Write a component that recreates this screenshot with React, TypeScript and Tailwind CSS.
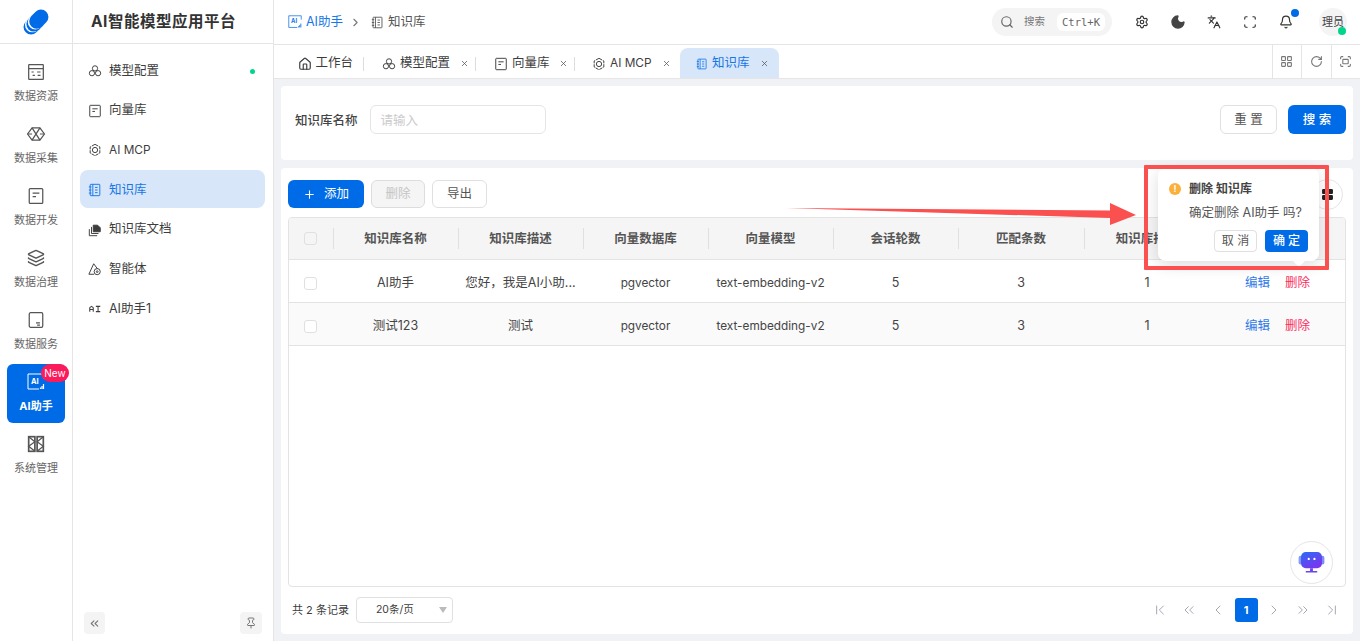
import React from 'react';
import { Bell, ChevronFirst, ChevronLast, ChevronLeft, ChevronRight, ChevronsLeft, ChevronsRight, Fullscreen, House, Languages, Layers, LayoutGrid, Moon, Pin, Plus, RotateCw, Scan, Search, Settings, X } from 'lucide-react';

type IconProps = { className?: string };

const Svg: React.FC<IconProps & { children: React.ReactNode }> = ({ className, children }) => (
  <svg viewBox="0 0 16 16" fill="none" stroke="currentColor" strokeWidth="1.1" className={className}>{children}</svg>
);

const ResourceIcon = ({ className }: IconProps) => (
  <Svg className={className}>
    <rect x="1.5" y="1.5" width="13" height="13" rx="0.5" />
    <path d="M1.5 5h13M4 8h2M9 8h3M5 11h2M9.5 11h2.5" />
  </Svg>
);
const CollectIcon = ({ className }: IconProps) => (
  <Svg className={className}>
    <path d="M4.5 2.5h7L15.5 8l-4 5.5h-7L.5 8z" />
    <path d="M4.5 2.5 11.5 13.5M11.5 2.5 4.5 13.5M.5 8h4M11.5 8h4" />
  </Svg>
);
const DocIcon = ({ className }: IconProps) => (
  <Svg className={className}>
    <rect x="2" y="1.5" width="12" height="13" rx="0.8" />
    <path d="M5 5.5h6M5 8.5h3" />
  </Svg>
);
const ServiceIcon = ({ className }: IconProps) => (
  <Svg className={className}>
    <rect x="2" y="1.5" width="12" height="13" rx="1.2" />
    <path d="M8 10.5h3.5M9 12.5h2.5" />
  </Svg>
);
const AiIcon = ({ className }: IconProps) => (
  <svg viewBox="0 0 18 18" fill="none" stroke="currentColor" strokeWidth="1" className={className}>
    <path d="M17 6V1H1v15h11" />
    <text x="4" y="10.5" fontSize="7.5" fontWeight="700" fill="currentColor" stroke="none" fontFamily="Inter">AI</text>
    <path d="M13.5 16v-1.5M15 16v-3M16.5 16V11" strokeWidth="1.2" />
  </svg>
);
const SystemIcon = ({ className }: IconProps) => (
  <Svg className={className}>
    <rect x="1.5" y="1.5" width="5.5" height="13" strokeWidth="1.5" />
    <rect x="9" y="1.5" width="5.5" height="13" strokeWidth="1.5" />
    <path d="M1.5 1.5 7 6 1.5 10 7 14.500M14.5 1.500 9 6l5.500 4L9 14.500" />
  </Svg>
);
const ModelIcon = ({ className }: IconProps) => (
  <Svg className={className}>
    <circle cx="8" cy="5" r="3" />
    <circle cx="4.500" cy="10.500" r="3" />
    <circle cx="11.500" cy="10.500" r="3" />
  </Svg>
);
const McpIcon = ({ className }: IconProps) => (
  <Svg className={className}>
    <path d="M8 1.500 13.500 4.500v7L8 14.500 2.500 11.500v-7z" strokeDasharray="4 1" />
    <circle cx="8" cy="8" r="3" />
  </Svg>
);
const BookIcon = ({ className }: IconProps) => (
  <Svg className={className}>
    <rect x="2.500" y="1.500" width="11" height="13" rx="0.8" />
    <path d="M5.500 1.500v13M1 4.500h3M1 8h3M1 11.500h3M8 5h3M8 8h3M8 11h3" />
  </Svg>
);
const FilesIcon = ({ className }: IconProps) => (
  <Svg className={className}>
    <path d="M6 10V2.500h5l3 3V10z" fill="currentColor" />
    <path d="M4 4.500v7.500h8M1.500 7v7.500h9" />
  </Svg>
);
const AgentIcon = ({ className }: IconProps) => (
  <Svg className={className}>
    <path d="M6.500 2 1 14h6" />
    <path d="M6.500 2 11 8" />
    <circle cx="10.500" cy="11" r="3.500" />
    <circle cx="10.500" cy="11" r="1" />
  </Svg>
);
const RiIcon = ({ className }: IconProps) => (
  <Svg className={className}>
    <path d="M2 11V6.500L4 5l2 1.500V11M2 8.500h4M9 5h5M11.500 5v6M9 11h5" strokeWidth="1.200" />
  </Svg>
);
const Logo = () => (
  <svg viewBox="0 0 26 26" className="w-[26px] h-[26px]">
    <g transform="rotate(-45 13 13)">
      <rect x="-1.500" y="5.500" width="20" height="15" rx="7.500" fill="#006be6" />
      <rect x="1" y="5" width="20" height="15" rx="7.500" fill="#fff" />
      <rect x="2.500" y="5.500" width="20" height="15" rx="7.500" fill="#006be6" />
      <rect x="5" y="5" width="20" height="15" rx="7.500" fill="#fff" />
      <rect x="6.500" y="5.500" width="21" height="15" rx="7.500" fill="#006be6" />
    </g>
  </svg>
);
const RobotIcon = () => (
  <svg viewBox="0 0 28 22" className="w-[27px] h-[21px]">
    <defs>
      <linearGradient id="bot" x1="0" y1="0" x2="0.600" y2="1">
        <stop offset="0" stopColor="#2a6cf5" />
        <stop offset="1" stopColor="#7a35ee" />
      </linearGradient>
    </defs>
    <rect x="0.500" y="4" width="4" height="9" rx="2" fill="#7f9df7" />
    <rect x="23.500" y="4" width="4" height="9" rx="2" fill="#7f8df7" />
    <rect x="3" y="0" width="22" height="17" rx="5" fill="url(#bot)" />
    <rect x="10" y="6" width="2.200" height="2.500" rx="1" fill="#fff" />
    <rect x="16" y="6" width="2.200" height="2.500" rx="1" fill="#fff" />
    <path d="M8 20h12v1.500H8zM12.500 17h3v3h-3z" fill="#6a45ee" />
  </svg>
);

const railItems = [
  { label: '数据资源', Icon: ResourceIcon },
  { label: '数据采集', Icon: CollectIcon },
  { label: '数据开发', Icon: DocIcon },
  { label: '数据治理', Icon: Layers },
  { label: '数据服务', Icon: ServiceIcon },
  { label: 'AI助手', Icon: AiIcon, active: true },
  { label: '系统管理', Icon: SystemIcon },
];

const menuItems = [
  { label: '模型配置', Icon: ModelIcon, dot: true },
  { label: '向量库', Icon: DocIcon },
  { label: 'AI MCP', Icon: McpIcon },
  { label: '知识库', Icon: BookIcon, active: true },
  { label: '知识库文档', Icon: FilesIcon },
  { label: '智能体', Icon: AgentIcon },
  { label: 'AI助手1', Icon: RiIcon },
];

const columns = ['知识库名称', '知识库描述', '向量数据库', '向量模型', '会话轮数', '匹配条数', '知识库排序'];

const rows = [
  ['AI助手', '您好，我是AI小助...', 'pgvector', 'text-embedding-v2', '5', '3', '1'],
  ['测试123', '测试', 'pgvector', 'text-embedding-v2', '5', '3', '1'],
];

const tableGrid = 'grid grid-cols-[45px_125px_125px_125px_125px_125px_126px_126px_1fr]';

const App: React.FC = () => {
  return (
    <div className="relative flex h-[641px] w-[1360px] overflow-hidden bg-[#f0f2f6] text-[12.500px] text-[#3d3d3d] font-['Inter','Noto_Sans_CJK_SC',sans-serif]">
      {/* icon rail */}
      <aside className="w-[73px] shrink-0 bg-white border-r border-[#e5e5e5] flex flex-col items-center">
        <div className="h-[44px] w-full flex items-center justify-center border-b border-[#e5e5e5]">
          <Logo />
        </div>
        <div className="flex flex-col gap-[4px] pt-[13px]">
          {railItems.map(({ label, Icon, active }) => (
            <div key={label} className={`relative w-[58px] rounded-[6px] flex flex-col items-center ${active ? '-mt-[3px] mb-[2px] h-[59px] pt-[9px] bg-[#006be6] text-white font-bold' : 'h-[58px] pt-[6px] text-[#666]'}`}>
              <Icon className={`w-[18px] h-[18px] ${active ? 'text-white' : 'text-[#555]'}`} />
              <span className="mt-[7px] text-[11px] leading-[16px] whitespace-nowrap">{label}</span>
              {active && (
                <span className="absolute top-0 -right-[4px] h-[18px] w-[28px] rounded-full bg-[#fb1a5c] text-white text-[10px] font-normal leading-[18px] text-center">New</span>
              )}
            </div>
          ))}
        </div>
      </aside>

      {/* menu */}
      <aside className="w-[201px] shrink-0 bg-white border-r border-[#e5e5e5] flex flex-col">
        <div className="h-[44px] border-b border-[#e5e5e5] flex items-center pl-[18px] text-[15.500px] font-bold text-[#333] tracking-[0.500px] whitespace-nowrap">AI智能模型应用平台</div>
        <nav className="flex flex-col gap-[1.700px] pt-[7px] px-[7px]">
          {menuItems.map(({ label, Icon, dot, active }) => (
            <div key={label} className={`h-[38px] w-[185px] rounded-[8px] flex items-center pl-[8px] pt-[2px] ${active ? 'bg-[#d8e6f9] text-[#1677e8]' : 'text-[#3d3d3d]'}`}>
              <Icon className="w-[14px] h-[14px] shrink-0" />
              <span className={`ml-[7px] ${label === 'AI MCP' ? 'text-[11.800px]' : ''}`}>{label}</span>
              {dot && <span className="ml-auto mr-[10px] w-[5px] h-[5px] rounded-full bg-[#00d68a]" />}
            </div>
          ))}
        </nav>
        <div className="mt-auto flex justify-between px-[11px] pb-[7px]">
          <button className="w-[21px] h-[22px] rounded-[4px] bg-[#f4f4f5] flex items-center justify-center text-[#777]"><ChevronsLeft className="w-[13px] h-[13px]" /></button>
          <button className="w-[22px] h-[22px] rounded-[4px] bg-[#f4f4f5] flex items-center justify-center text-[#777]"><Pin className="w-[12px] h-[12px]" /></button>
        </div>
      </aside>

      <main className="flex-1 min-w-0 flex flex-col">
        {/* top bar */}
        <header className="h-[45px] shrink-0 bg-white border-b border-[#e5e5e5] flex items-center pl-[14px] pr-[13px]">
          <AiIcon className="w-[14px] h-[14px] text-[#1677e8]" />
          <span className="ml-[4px] text-[#1677e8]">AI助手</span>
          <ChevronRight className="ml-[6px] w-[13px] h-[13px] text-[#777]" />
          <BookIcon className="ml-[9px] w-[13px] h-[13px] text-[#555]" />
          <span className="ml-[4px] text-[#555]">知识库</span>
          <div className="ml-auto w-[120px] h-[28px] rounded-full bg-[#f4f4f5] flex items-center pl-[8px] pr-[7px]">
            <Search className="w-[14px] h-[14px] text-[#666]" />
            <span className="ml-[10px] text-[10.500px] text-[#777]">搜索</span>
            <span className="ml-auto w-[48px] h-[18px] rounded-[6px] bg-white text-center text-[10.500px] leading-[18px] text-[#666] font-['DejaVu_Sans_Mono',monospace]">Ctrl+K</span>
          </div>
          <div className="ml-[23px] flex items-center gap-[22px] text-[#333]">
            <Settings className="w-[14px] h-[14px]" />
            <Moon className="w-[14px] h-[14px] scale-[1.150] fill-[#444] text-[#444]" />
            <Languages className="w-[14px] h-[14px]" />
            <Scan className="w-[14px] h-[14px]" />
            <div className="relative">
              <Bell className="w-[14px] h-[14px]" />
              <span className="absolute -top-[6px] -right-[6px] w-[8px] h-[8px] rounded-full bg-[#006be6]" />
            </div>
          </div>
          <div className="relative ml-[26px] w-[28px] h-[28px] rounded-full bg-[#f4f4f5] text-[11px] leading-[28px] text-center text-[#444]">
            理员
            <span className="absolute right-[1px] bottom-[1px] w-[8px] h-[8px] rounded-full bg-[#00d68a]" />
          </div>
        </header>

        {/* tabs */}
        <div className="h-[34px] shrink-0 bg-white border-b border-[#e5e5e5] flex items-end">
          <div className="h-[31px] w-[90px] pl-[24px] pt-[2px] flex items-center gap-[3.500px]">
            <House className="w-[14px] h-[14px]" />
            <span>工作台</span>
            <span className="ml-auto h-[14px] border-r border-[#ddd]" />
          </div>
          <div className="h-[31px] w-[112px] pl-[18px] pt-[2px] flex items-center">
            <ModelIcon className="w-[14px] h-[14px] shrink-0" />
            <span className="ml-[4px] whitespace-nowrap">模型配置</span>
            <X className="ml-auto mr-[6px] w-[9px] h-[9px] text-[#555]" />
            <span className="h-[14px] border-r border-[#ddd]" />
          </div>
          <div className="h-[31px] w-[99px] pl-[18px] pt-[2px] flex items-center">
            <DocIcon className="w-[14px] h-[14px] shrink-0" />
            <span className="ml-[4px] whitespace-nowrap">向量库</span>
            <X className="ml-auto mr-[6px] w-[9px] h-[9px] text-[#555]" />
            <span className="h-[14px] border-r border-[#ddd]" />
          </div>
          <div className="h-[31px] w-[105px] pl-[17px] pt-[2px] flex items-center">
            <McpIcon className="w-[14px] h-[14px] shrink-0" />
            <span className="ml-[4px] text-[11.800px] whitespace-nowrap">AI MCP</span>
            <X className="ml-auto mr-[9px] w-[9px] h-[9px] text-[#555]" />
          </div>
          <div className="h-[30px] w-[99px] rounded-t-[8px] bg-[#d8e6f9] text-[#1677e8] flex items-center pl-[16px] pt-[1px]">
            <BookIcon className="w-[12px] h-[12px]" />
            <span className="ml-[4px]">知识库</span>
            <X className="ml-auto mr-[10px] w-[9px] h-[9px] text-[#555]" />
          </div>
          <div className="ml-auto flex h-[33px] text-[#777]">
            {[LayoutGrid, RotateCw, Fullscreen].map((Icon, i) => (
              <div key={i} className="w-[29.500px] flex items-center justify-center border-l border-[#e5e5e5]">
                <Icon className="w-[13px] h-[13px]" />
              </div>
            ))}
          </div>
        </div>

        {/* content */}
        <div className="flex-1 min-h-0 flex flex-col gap-[8px] p-[7px]">
          <section className="h-[74px] shrink-0 bg-white rounded-[4px] flex items-center pl-[14px] pr-[7px] pb-[7px]">
            <label className="pt-[3px] font-medium text-[#444]">知识库名称</label>
            <div className="ml-[12px] w-[176px] h-[29px] rounded-[6px] border border-[#e5e5e5] pl-[10px] leading-[29px] text-[#ccc]">请输入</div>
            <button className="ml-auto w-[57px] h-[29px] pt-[2px] rounded-[6px] border border-[#e0e0e0] text-[#555]">重 置</button>
            <button className="ml-[11px] w-[58px] h-[29px] pt-[2px] rounded-[6px] bg-[#006be6] text-white font-medium">搜 索</button>
          </section>

          <section className="flex-1 min-h-0 bg-white rounded-[4px] flex flex-col px-[7px] pt-[12px] pb-[11px]">
            <div className="h-[28px] shrink-0 flex items-center">
              <button className="w-[76px] h-[28px] rounded-[6px] bg-[#006be6] text-white flex items-center justify-center gap-[8px]"><Plus className="w-[13px] h-[13px]" />添加</button>
              <button className="ml-[7px] w-[54px] h-[28px] rounded-[6px] border border-[#ddd] bg-[#f5f5f5] text-[#c4c4c4]">删除</button>
              <button className="ml-[7px] w-[55px] h-[28px] rounded-[6px] border border-[#e0e0e0] text-[#555]">导出</button>
              <button className="ml-auto mr-[3px] w-[31px] h-[31px] rounded-full border border-[#e5e5e5] flex items-center justify-center"><LayoutGrid className="w-[13px] h-[13px] fill-[#222] text-[#222]" /></button>
            </div>

            <div className="mt-[9px] flex-1 min-h-0 border border-[#e3e3e3] rounded-[4px] overflow-hidden">
              <div className={`${tableGrid} h-[42px] bg-[#f5f5f5] border-b border-[#e3e3e3] items-center font-semibold text-[#555]`}>
                <div className="h-[21px] pr-[2px] flex items-center justify-center border-r border-[#e0e0e0]">
                  <span className="w-[13px] h-[13px] rounded-[3px] border border-[#e0e0e0]" />
                </div>
                {columns.map(col => (
                  <div key={col} className="h-[21px] pr-[1px] leading-[21px] text-center border-r border-[#e0e0e0] whitespace-nowrap overflow-hidden">{col}</div>
                ))}
              </div>
              {rows.map((row, i) => (
                <div key={row[0]} className={`${tableGrid} h-[43px] pt-[5px] border-b border-[#e3e3e3] items-center text-[#444] ${i === 1 ? 'bg-[#fafafa]' : 'bg-white'}`}>
                  <div className="flex justify-center pr-[2px]">
                    <span className="w-[13px] h-[13px] rounded-[3px] border border-[#e0e0e0] bg-white" />
                  </div>
                  {row.map((cell, j) => (
                    <div key={j} className={`pr-[2px] text-center whitespace-nowrap ${j === 2 || j === 3 ? 'text-[11.800px]' : ''}`}>{cell}</div>
                  ))}
                  <div className="flex justify-center gap-[15px] pr-[1px]">
                    <span className="text-[#2f7ae8]">编辑</span>
                    <span className="text-[#fb2e5e]">删除</span>
                  </div>
                </div>
              ))}
            </div>

            <div className="h-[26px] mt-[10px] shrink-0 flex items-center pl-[4px] text-[11px]">
              <span>共 2 条记录</span>
              <div className="ml-[7px] w-[97px] h-[26px] rounded-[4px] border border-[#e0e0e0] relative flex items-center pl-[19px] text-[10.500px]">
                20条/页
                <span className="absolute right-[5px] top-[9px] border-x-[4px] border-x-transparent border-t-[6px] border-t-[#bbb]" />
              </div>
              <div className="ml-auto flex items-center gap-[12.800px] pr-[6px] text-[#a3a8b0]">
                <ChevronFirst strokeWidth={1.500} className="w-[16px] h-[16px]" />
                <ChevronsLeft strokeWidth={1.500} className="w-[16px] h-[16px]" />
                <ChevronLeft strokeWidth={1.500} className="w-[16px] h-[16px]" />
                <span className="w-[23px] h-[24px] -mx-[4px] rounded-[3px] bg-[#006be6] text-white font-bold text-center leading-[24px]">1</span>
                <ChevronRight strokeWidth={1.500} className="w-[16px] h-[16px]" />
                <ChevronsRight strokeWidth={1.500} className="w-[16px] h-[16px]" />
                <ChevronLast strokeWidth={1.500} className="w-[16px] h-[16px]" />
              </div>
            </div>
          </section>
        </div>
      </main>

      {/* popconfirm */}
      <div className="absolute left-[1158px] top-[168px] w-[161px] h-[93px] rounded-[8px] bg-white shadow-[0_4px_16px_rgba(0,0,0,0.14)] px-[11px] pt-[12px]">
        <div className="flex items-center">
          <span className="w-[12px] h-[12px] rounded-full bg-[#fbb03b] text-white text-[9px] leading-[12px] text-center font-bold">!</span>
          <span className="ml-[8px] text-[12px] font-semibold text-[#444]">删除 知识库</span>
        </div>
        <div className="mt-[6px] ml-[20px] text-[12.500px] text-[#555] whitespace-nowrap">确定删除 AI助手 吗?</div>
        <div className="mt-[7px] flex justify-end gap-[8px]">
          <button className="w-[43px] h-[22px] rounded-[4px] border border-[#e0e0e0] text-[12px] text-[#555]">取 消</button>
          <button className="w-[43px] h-[22px] rounded-[4px] bg-[#006be6] text-white text-[12px] font-medium">确 定</button>
        </div>
        <span className="absolute left-[136px] -bottom-[4px] w-[10px] h-[10px] rotate-45 bg-white" />
      </div>

      {/* annotation */}
      <div className="absolute left-[1144px] top-[165px] w-[185px] h-[105px] border-[4px] border-[#fb5050] rounded-[1px]" />
      <svg className="absolute left-[780px] top-[200px] w-[360px] h-[30px]" viewBox="0 0 360 30">
        <polygon points="6,8 330,10.500 330,3 356,15 330,25 330,18" fill="#fb5050" />
      </svg>

      {/* chat */}
      <div className="absolute left-[1290px] top-[541px] w-[43px] h-[43px] rounded-full bg-white border border-[#e5e5e5] flex items-center justify-center">
        <RobotIcon />
      </div>
    </div>
  );
};

export default App;
